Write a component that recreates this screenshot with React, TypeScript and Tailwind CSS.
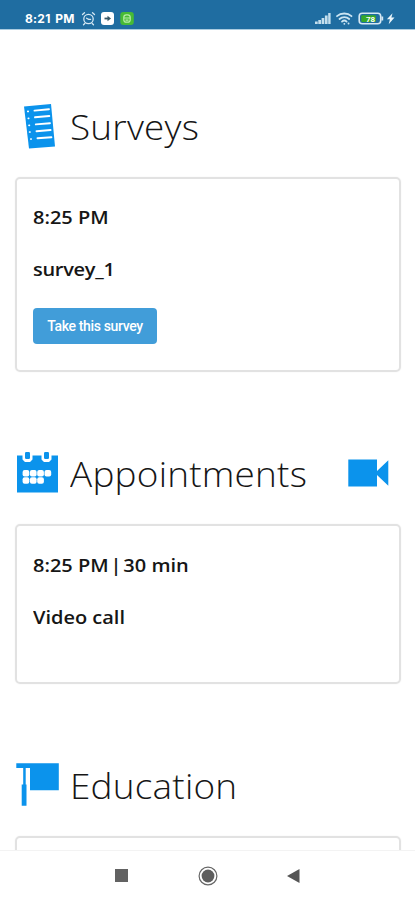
import type { ReactNode } from 'react';

const SurveyIcon = () => (
  <svg className="h-[46px] w-[44px] shrink-0" viewBox="0 0 44 46">
    <path d="M9 3.5 36 1l4 42.500-26 2z" fill="#0b93ec" />
    <g stroke="#fff" strokeWidth="1.900" strokeLinecap="round">
      <path d="M19.500 7.600 34 6.200M20 14.300 34.300 13M20.800 21.400 35 20.200M21.500 28.200 35.600 27M22.500 35.200 36.400 34.200" />
      <path d="M12.800 8.400h.4M13.300 15.300h.4M14 22.300h.4M14.600 29h.4M15.800 36h.4" strokeWidth="1.700" />
    </g>
  </svg>
);

const CalendarIcon = () => (
  <svg className="h-[46px] w-[44px] shrink-0" viewBox="0 0 44 46">
    <path d="M2 5.500h5.500v4l2.500 2.500h5l2.500-2.500v-4H26.500v4l2.500 2.500h5l2.500-2.500v-4H43v37H2z" fill="#0b93ec" />
    <rect x="10" y="2" width="5" height="7" rx="1.200" fill="#0b93ec" />
    <rect x="29" y="2" width="5" height="7" rx="1.200" fill="#0b93ec" />
    <g fill="#fff">
      {[7.6, 14.9, 22.2, 29.5].map((x) => (
        <rect key={x} x={x} y="20" width="6.700" height="6.600" rx="2" />
      ))}
      {[7.6, 14.9, 22.2].map((x) => (
        <rect key={x} x={x} y="27.300" width="6.700" height="6.500" rx="2" />
      ))}
    </g>
  </svg>
);

const EducationIcon = () => (
  <svg className="h-[46px] w-[44px] shrink-0" viewBox="0 0 44 46">
    <path d="M1.300 1.200H43.800v27H15V6h-4.300v16.500h.8V43.700H6.700V22.500h1.500V6H1.300z" fill="#0b93ec" />
  </svg>
);

const CameraIcon = () => (
  <svg className="h-7 w-[41px]" viewBox="0 0 41 28">
    <path d="M.3.500h28.700v11.500L40.300 1.200v25.600L29 16v11.500H.3z" fill="#0b93ec" />
  </svg>
);

const StatusBar = () => (
  <header className="flex h-[30px] shrink-0 items-end border-b border-[#a9cbe0] bg-[#1f6da1] pr-[19px] pb-[3px] pl-[25px] text-white">
    <span className="w-[56px] font-['Inter',sans-serif] text-[12px] leading-[14px] font-bold tracking-[0.25px] whitespace-nowrap [word-spacing:1.5px]">
      8:21 PM
    </span>
    <svg className="h-[15px] w-[54px]" viewBox="0 0 54 15">
      <g fill="none" stroke="#d5e8f3" strokeWidth="1.300" strokeLinecap="round">
        <circle cx="7.500" cy="8" r="4.700" />
        <path d="m1.500 3.500 2-1.800M13.500 3.500l-2-1.800M3.800 12.500l-1.300 1.300M11.200 12.500l1.300 1.300M5.600 7.200l2 1.200h2" />
      </g>
      <rect x="20" y="1" width="13" height="13" rx="3" fill="#fff" />
      <path d="M23.500 7.500h4" stroke="#375765" strokeWidth="1.800" />
      <path d="m26.500 4.800 3.500 2.700-3.500 2.700z" fill="#375765" />
      <rect x="39.300" y="1" width="13.500" height="13" rx="3" fill="#46ba35" />
      <g fill="none" stroke="#b9edac" strokeWidth="1.200">
        <rect x="42.800" y="3.800" width="6.400" height="7.400" rx="2.500" />
        <path d="M43 7h6M44.500 9.200h3" />
      </g>
    </svg>
    <svg className="ml-auto h-[15px] w-[82px]" viewBox="0 0 82 15">
      <g fill="#c4dfed">
        <rect x="1" y="10.500" width="2.700" height="2.500" />
        <rect x="4.300" y="9" width="2.700" height="4" />
        <rect x="7.600" y="7" width="2.700" height="6" />
        <rect x="10.900" y="4.500" width="2.700" height="8.500" />
        <rect x="14.200" y="2" width="2.400" height="11" />
      </g>
      <g fill="none" stroke="#cbe5f2" strokeWidth="1.800" strokeLinecap="round">
        <path d="M23 5.200c4-3.600 10.500-3.600 14.500 0M25.500 8c2.700-2.400 7-2.400 9.700 0M28 10.600c1.300-1.200 3.300-1.200 4.600 0" />
        <path d="M30.300 12.800h.1M34.500 12.500h.1" />
      </g>
      <rect x="45.200" y="2.200" width="21.500" height="10.600" rx="3" fill="none" stroke="#d5e8f3" strokeWidth="1.600" />
      <path d="M68.300 5.500v4" stroke="#d5e8f3" strokeWidth="1.800" />
      <rect x="47.300" y="4.200" width="14.500" height="6.800" rx="1" fill="#35a928" />
      <text x="56.500" y="10.500" textAnchor="middle" fill="#fff" fontSize="8" fontWeight="700" fontFamily="Roboto, sans-serif">
        78
      </text>
      <path d="m78.500 2.200-5.600 6h3l-1.200 5 5.800-6.600h-3.100z" fill="#e9f5fb" />
    </svg>
  </header>
);

type SectionProps = {
  title: string;
  icon: ReactNode;
  action?: ReactNode;
  className: string;
  cardClass: string;
  children?: ReactNode;
};

const Section = ({ title, icon, action, className, cardClass, children }: SectionProps) => (
  <section className={`shrink-0 px-[15px] ${className}`}>
    <div className="flex h-[46px] items-center">
      {icon}
      <h2 className="ml-[10.5px] origin-left scale-x-[1.055] pt-[2px] text-[35px] leading-[46px] font-light tracking-[0.2px] whitespace-nowrap">
        {title}
      </h2>
      {action && <div className="mr-[11px] ml-auto">{action}</div>}
    </div>
    <div
      className={`mt-[28px] mr-[-1px] rounded-[5px] border-2 border-[#e2e2e2] px-4 shadow-[0_0_2px_rgba(0,0,0,0.06)] ${cardClass}`}
    >
      {children}
    </div>
  </section>
);

const CardText = ({ className = '', children }: { className?: string; children: ReactNode }) => (
  <p className={`origin-left scale-x-[1.11] text-[18px] leading-6 font-semibold whitespace-nowrap ${className}`}>
    {children}
  </p>
);

const NavBar = () => (
  <nav className="mr-[1px] grid h-[49px] shrink-0 grid-cols-[79px_93px_77px] justify-center bg-white">
    <div className="flex items-center justify-center pr-[1px]">
      <div className="h-[13px] w-[13px] bg-[#626262]" />
    </div>
    <div className="flex items-center justify-center">
      <svg className="h-5 w-5" viewBox="0 0 20 20">
        <circle cx="10" cy="10" r="8.900" fill="none" stroke="#666" strokeWidth="1.200" />
        <circle cx="10" cy="10" r="6.400" fill="#5e5e5e" />
      </svg>
    </div>
    <div className="flex items-center justify-center">
      <svg className="h-[14px] w-[13px]" viewBox="0 0 13 14">
        <path d="M0 7 12.500 0v14z" fill="#555" />
      </svg>
    </div>
  </nav>
);

export default function App() {
  return (
    <div className="flex h-[900px] w-[415px] flex-col overflow-hidden bg-white font-['Open_Sans','Noto_Sans',sans-serif] text-[#161616]">
      <StatusBar />
      <main className="flex min-h-0 flex-1 flex-col overflow-hidden border-b border-[#f3f3f3]">
        <Section title="Surveys" icon={<SurveyIcon />} className="pt-[73px]" cardClass="h-[195px] pt-[26px]">
          <CardText>8:25 PM</CardText>
          <CardText className="mt-[28px] tracking-[-0.25px]">survey_1</CardText>
          <button className="mt-[27px] block h-[36px] w-[124px] rounded-[4px] bg-[#419dd9] font-['Roboto',sans-serif] text-[14px] leading-[37px] font-medium tracking-[-0.35px] whitespace-nowrap text-white">
            Take this survey
          </button>
        </Section>
        <Section
          title="Appointments"
          icon={<CalendarIcon />}
          action={<CameraIcon />}
          className="pt-[78px]"
          cardClass="h-[160px] pt-[27px]"
        >
          <CardText>
            8:25 PM<span className="[word-spacing:-3px]"> | </span>30 min
          </CardText>
          <CardText className="mt-[28px]">Video call</CardText>
        </Section>
        <Section title="Education" icon={<EducationIcon />} className="pt-[78px]" cardClass="h-[160px]" />
      </main>
      <NavBar />
    </div>
  );
}
